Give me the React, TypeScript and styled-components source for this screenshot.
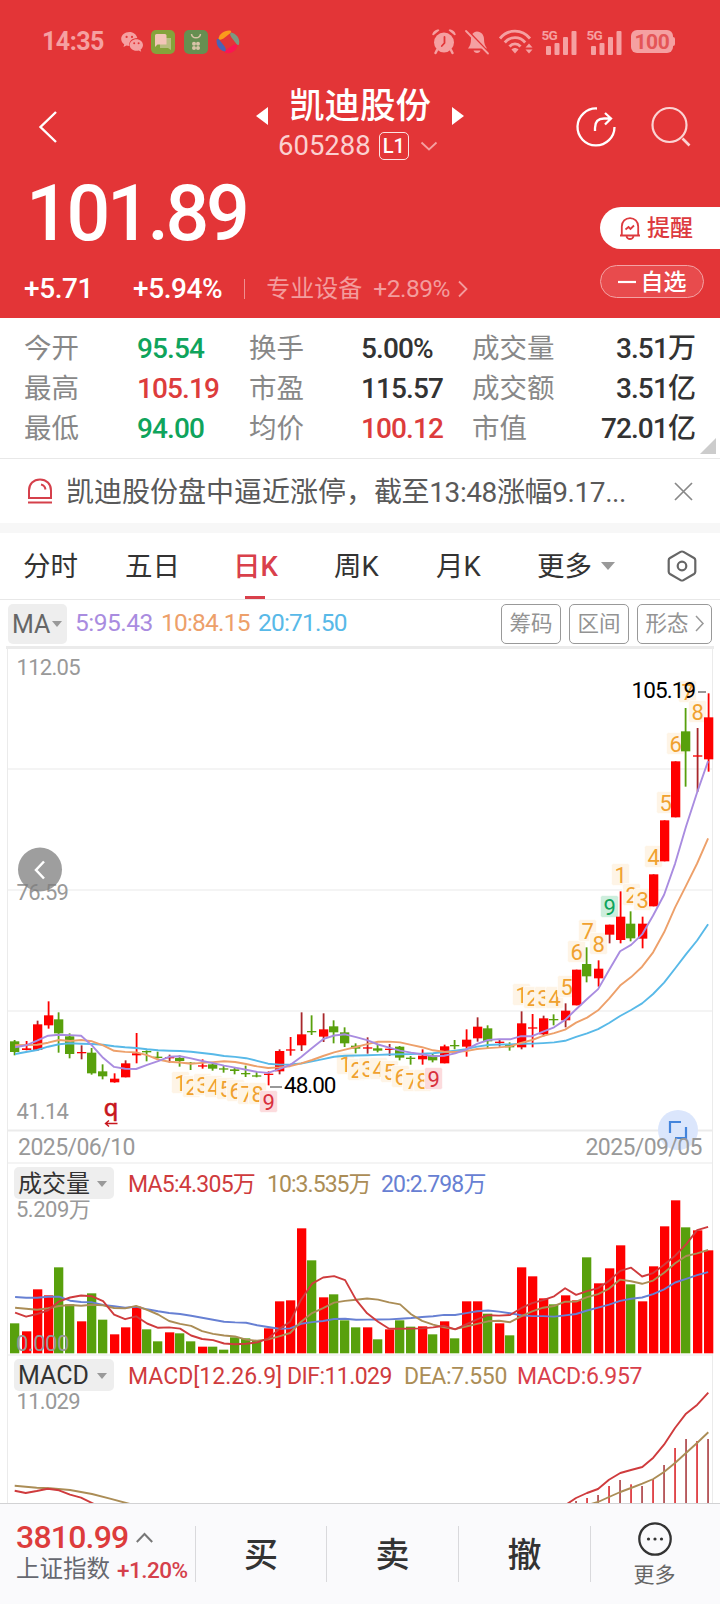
import React from 'react';
import styled, { createGlobalStyle } from 'styled-components';

const GlobalStyle = createGlobalStyle`
  * { box-sizing: border-box; }
  body {
    margin: 0;
    background: #fff;
    font-family: Roboto, 'Noto Sans CJK SC', sans-serif;
    color: #333;
  }
  svg { display: block; flex: none; overflow: visible; }
`;

const FONT = "Roboto, 'Noto Sans CJK SC', sans-serif";

/* ---------- layout ---------- */

const Screen = styled.div`
  width: 720px;
  height: 1604px;
  display: flex;
  flex-direction: column;
  overflow: hidden;
  background: #fff;
`;

const Text = styled.span<{ $size: number; $color?: string; $weight?: number; $ls?: number; $ml?: number; $w?: number }>`
  flex: none;
  white-space: nowrap;
  line-height: 1;
  font-size: ${p => p.$size}px;
  color: ${p => p.$color ?? 'inherit'};
  font-weight: ${p => p.$weight ?? 400};
  letter-spacing: ${p => p.$ls ?? 0}px;
  margin-left: ${p => p.$ml ?? 0}px;
  width: ${p => (p.$w ? `${p.$w}px` : 'auto')};
`;

/* ---------- header ---------- */

const Header = styled.header`
  height: 318px;
  background: #e33537;
  color: #fff;
`;

const StatusBar = styled.div`
  height: 82px;
  padding: 1px 47px 0 42px;
  display: flex;
  align-items: center;
  color: #f5a0a1;
`;

const StatusIcons = styled.div<{ $gap: number; $ml: string }>`
  display: flex;
  align-items: center;
  gap: ${p => p.$gap}px;
  margin-left: ${p => p.$ml};
`;

const Battery = styled.div`
  position: relative;
  width: 42px;
  height: 23px;
  border-radius: 6px;
  background: #f5a0a1;
  color: #e45557;
  font-size: 21px;
  font-weight: 700;
  line-height: 24px;
  text-align: center;
  letter-spacing: -0.3px;
  &::after {
    content: '';
    position: absolute;
    right: -2px;
    top: 7px;
    width: 2px;
    height: 9px;
    border-radius: 0 2px 2px 0;
    background: #f5a0a1;
  }
`;

const NavBar = styled.div`
  height: 88px;
  display: grid;
  grid-template-columns: 256px 208px 1fr;
`;

const NavBack = styled.div`
  padding: 29px 0 0 38px;
`;

const NavCenter = styled.div`
  display: flex;
  flex-direction: column;
`;

const TitleRow = styled.div`
  height: 48px;
  padding-top: 2px;
  display: flex;
  align-items: center;
  justify-content: space-between;
  svg { margin-top: 18px; }
`;

const CodeRow = styled.div`
  height: 32px;
  padding-left: 22px;
  display: flex;
  align-items: center;
`;

const LevelBadge = styled.span`
  width: 30px;
  height: 28px;
  margin: 0 12px 0 8px;
  border: 1.5px solid #fbe3e3;
  border-radius: 5px;
  font-size: 20px;
  line-height: 26px;
  font-weight: 500;
  text-align: center;
`;

const NavActions = styled.div`
  display: flex;
  gap: 35px;
  padding: 25px 0 0 112px;
`;

const QuoteRow = styled.div`
  height: 148px;
  display: flex;
  justify-content: space-between;
`;

const QuoteMain = styled.div`
  display: flex;
  flex-direction: column;
`;

const Price = styled.div`
  height: 80px;
  padding: 5px 0 0 26px;
  font-size: 77px;
  line-height: 78px;
  font-weight: 500;
  letter-spacing: -3.3px;
`;

const ChangeRow = styled.div`
  height: 40px;
  margin-top: 19px;
  padding-left: 24px;
  display: flex;
  align-items: center;
`;

const ThinBar = styled.i`
  width: 1px;
  height: 20px;
  margin: 0 21px 0 22px;
  background: #f08f90;
`;

const QuoteActions = styled.div`
  width: 120px;
  padding-top: 37px;
  display: flex;
  flex-direction: column;
  gap: 16px;
`;

const RemindButton = styled.button`
  height: 42px;
  padding: 1px 0 0 19px;
  border: 0;
  border-radius: 21px 0 0 21px;
  background: #fff;
  color: #dd3a3e;
  font: 500 23px/42px ${FONT};
  display: flex;
  align-items: center;
  gap: 6px;
`;

const WatchButton = styled.button`
  width: 104px;
  height: 33px;
  padding: 1px 0 0;
  border: 1px solid #f3a3a4;
  border-radius: 17px;
  background: #e84b4d;
  color: #fff;
  font: 500 23px/31px ${FONT};
  display: flex;
  align-items: center;
  justify-content: center;
  gap: 5px;
`;

/* ---------- statistics ---------- */

const Stats = styled.section`
  position: relative;
  height: 141px;
  padding: 11px 25px 0 24px;
  border-bottom: 1px solid #e8e8e8;
  display: grid;
  grid-template-columns: 113px 112px 112px 111px 99px 1fr;
  grid-auto-rows: 40px;
  align-items: center;
`;

const StatLabel = styled.span`
  font-size: 27.5px;
  line-height: 40px;
  color: #888;
`;

const StatValue = styled.span<{ $tone: Tone; $right?: boolean }>`
  font-size: 28px;
  line-height: 40px;
  letter-spacing: -0.9px;
  font-weight: 500;
  white-space: nowrap;
  color: ${p => ({ up: '#dd3c3c', down: '#0fa45c', flat: '#333' })[p.$tone]};
  justify-self: ${p => (p.$right ? 'end' : 'start')};
`;

const Corner = styled.i`
  position: absolute;
  right: 4px;
  bottom: 4px;
  border-left: 16px solid transparent;
  border-bottom: 16px solid #ccc;
`;

const News = styled.section`
  height: 64px;
  padding: 0 27px 0 27px;
  display: flex;
  align-items: center;
  justify-content: space-between;
`;

const NewsText = styled.p`
  margin: 3px auto 0 13px;
  font-size: 28px;
  line-height: 40px;
  color: #595959;
  white-space: nowrap;
`;

const NewsTail = styled.span`
  letter-spacing: -0.4px;
`;

const Band = styled.div`
  height: 10px;
  background: #f7f7f7;
`;

/* ---------- tabs ---------- */

const Tabs = styled.nav`
  height: 67px;
  border-bottom: 1px solid #e8e8e8;
  display: flex;
  align-items: center;
`;

const Tab = styled.div<{ $ml: number; $w: number; $active?: boolean }>`
  height: 66px;
  width: ${p => p.$w}px;
  margin-left: ${p => p.$ml}px;
  font-size: 27.5px;
  line-height: 68px;
  font-weight: ${p => (p.$active ? 500 : 400)};
  white-space: nowrap;
  color: ${p => (p.$active ? '#d9404b' : '#333')};
  background: ${p =>
    p.$active ? 'linear-gradient(#d9404b, #d9404b) center bottom / 20px 3px no-repeat' : 'none'};
`;

const Caret = styled.i<{ $ml?: number; $s?: number }>`
  flex: none;
  margin-left: ${p => p.$ml ?? 0}px;
  border: ${p => p.$s ?? 5}px solid transparent;
  border-top-color: #999;
  border-bottom-width: 0;
  border-top-width: ${p => (p.$s ?? 5) + 1}px;
`;

/* ---------- chart panels ---------- */

const MaRow = styled.div`
  height: 46px;
  padding: 1px 8px 0 8px;
  display: flex;
  align-items: center;
`;

const IndicatorButton = styled.button<{ $w: number; $h: number; $pl: number }>`
  flex: none;
  width: ${p => p.$w}px;
  height: ${p => p.$h}px;
  padding: 1px 0 0 ${p => p.$pl}px;
  border: 0;
  border-radius: 5px;
  background: #eee;
  color: #333;
  font: 400 24px/1 ${FONT};
  display: flex;
  align-items: center;
`;

const ToolGroup = styled.div`
  margin-left: auto;
  display: flex;
  gap: 8px;
`;

const ToolButton = styled.button<{ $w: number }>`
  width: ${p => p.$w}px;
  height: 40px;
  padding: 0;
  border: 1px solid #999;
  border-radius: 5px;
  background: #fff;
  color: #939393;
  font: 400 21.5px/1 ${FONT};
  display: flex;
  align-items: center;
  justify-content: center;
  gap: 6px;
`;

const Charts = styled.main`
  height: 857px;
  overflow: hidden;
  background: #fff;
`;

const PanelHead = styled.div<{ $h: number; $pb: number }>`
  height: ${p => p.$h}px;
  padding: 0 0 ${p => p.$pb}px 14px;
  display: flex;
  align-items: flex-end;
  box-shadow: inset 7px 0 #fff, inset 8px 0 #ebebeb, inset -7px 0 #fff, inset -8px 0 #ebebeb;
`;

const Legend = styled.div`
  height: 32px;
  padding-top: 2px;
  display: flex;
  align-items: center;
`;

/* ---------- bottom bar ---------- */

const BottomBar = styled.footer`
  height: 101px;
  border-top: 1px solid #d2d2d4;
  background: #fafafc;
  display: grid;
  grid-template-columns: 195px 131px 132px 132px 1fr;
`;

const IndexCell = styled.div`
  padding: 16px 0 0 16px;
  display: flex;
  flex-direction: column;
`;

const IndexLine = styled.div<{ $h: number }>`
  height: ${p => p.$h}px;
  display: flex;
  align-items: center;
`;

const Action = styled.div`
  height: 56px;
  margin-top: 22px;
  border-left: 1px solid #d9d9dc;
  font-size: 34px;
  line-height: 59px;
  font-weight: 500;
  text-align: center;
`;

const MoreAction = styled(Action)`
  padding-right: 2px;
  display: flex;
  flex-direction: column;
  align-items: center;
  gap: 8px;
  font-size: 21px;
  font-weight: 400;
  line-height: 22px;
  color: #666;
  svg { margin-top: -4px; }
`;

/* ---------- data ---------- */

type Tone = 'up' | 'down' | 'flat';

const STATS: [string, string, Tone][] = [
  ['今开', '95.54', 'down'], ['换手', '5.00%', 'flat'], ['成交量', '3.51万', 'flat'],
  ['最高', '105.19', 'up'], ['市盈', '115.57', 'flat'], ['成交额', '3.51亿', 'flat'],
  ['最低', '94.00', 'down'], ['均价', '100.12', 'up'], ['市值', '72.01亿', 'flat'],
];

const UP = '#fe0000';
const DOWN = '#58a00c';

/* one candle: rising flag, body top, body bottom, wick top, wick bottom */
type Candle = [0 | 1, number, number, number, number];
const shift = (base: number, rows: Candle[]): Candle[] =>
  rows.map(([up, ...v]) => [up, ...v.map(n => base + n / 3)] as Candle);

const CANDLES: Candle[] = [
  ...shift(980, [
    [0, 184, 216, 180, 226], [1, 205, 210, 183, 211], [1, 133, 210, 122, 213], [1, 106, 136, 64, 146],
    [0, 118, 160, 97, 218], [0, 169, 222, 160, 235], [1, 216, 219, 196, 238], [0, 218, 280, 204, 284],
    [0, 274, 289, 253, 298], [1, 296, 307, 280, 308], [1, 250, 292, 241, 292], [1, 220, 226, 159, 250],
    [0, 213, 217, 211, 244], [0, 230, 234, 215, 236], [1, 231, 235, 224, 248], [0, 234, 243, 226, 260],
    [0, 248, 251, 246, 270], [1, 256, 259, 238, 266], [0, 253, 266, 250, 272], [0, 265, 268, 257, 278],
    [0, 268, 273, 263, 283], [0, 279, 282, 257, 291], [0, 286, 289, 276, 292], [1, 281, 284, 274, 316],
    [1, 213, 274, 208, 283], [1, 208, 211, 171, 227], [1, 163, 196, 97, 213], [0, 153, 156, 106, 165],
    [1, 148, 170, 100, 186], [0, 139, 157, 121, 190], [0, 157, 190, 142, 201], [0, 197, 206, 190, 220],
    [1, 202, 205, 172, 221], [0, 205, 212, 195, 217], [1, 206, 209, 192, 228], [0, 200, 233, 198, 241],
    [0, 233, 236, 228, 254], [1, 227, 238, 208, 254], [0, 226, 241, 220, 247], [1, 199, 250, 194, 250],
    [0, 195, 198, 180, 208], [1, 179, 200, 148, 230], [1, 140, 175, 112, 185],
  ]),
  ...shift(840, [
    [0, 565, 604, 556, 625], [1, 605, 608, 598, 620], [0, 614, 622, 607, 632], [1, 550, 622, 514, 628],
    [1, 562, 565, 522, 622], [1, 535, 583, 527, 589], [0, 537, 540, 523, 556], [1, 512, 541, 490, 562],
    [1, 389, 496, 389, 496], [0, 372, 409, 322, 427], [1, 386, 415, 361, 440], [1, 254, 284, 254, 310],
    [1, 230, 300, 154, 310], [0, 251, 295, 214, 304], [1, 251, 296, 230, 325], [1, 103, 199, 103, 199],
  ]),
  ...shift(660, [
    [1, 481, 604, 481, 604], [1, 304, 472, 304, 472], [0, 214, 274, 144, 380], [1, 286, 290, 204, 395],
    [1, 172, 298, 100, 335],
  ]),
];

const VOLUME = [
  490, 514, 388, 406, 322, 433, 484, 400, 479, 523, 502, 440, 508, 544, 517, 520, 544, 560, 560, 569, 532, 535,
  540, 505, 424, 421, 205, 301, 412, 403, 481, 502, 502, 538, 508, 481, 500, 499, 523, 484, 535, 424, 424, 461,
  490, 526, 322, 349, 415, 433, 406, 421, 292, 370, 325, 256, 373, 424, 319, 199, 121, 202, 211, 271,
].map(v => 1160 + v / 3);

const colX = (i: number) => 14.7 + i * 11;
const barX = (i: number) => Math.round(colX(i) + (CANDLES[i][0] ? 1 : 0) - 4.5);

const average = (values: number[], span: number, head: number[]) =>
  values.map((_, i) =>
    i < head.length ? head[i] : values.slice(i - span + 1, i + 1).reduce((a, b) => a + b, 0) / span,
  );
const line = (ys: number[]) => ys.map((y, i) => `${(colX(i) + 0.4).toFixed(1)},${y.toFixed(1)}`).join(' ');
const from = (base: number, v: number[]) => v.map(n => base + n / 3);

const CLOSE = CANDLES.map(c => (c[0] ? c[1] : c[2]));
const PRICE_MA = [
  { color: '#58b9e8', ys: average(CLOSE, 20, from(980, [222, 216, 210, 200, 193, 190, 191, 192, 194, 199, 202, 204, 208, 211, 212, 213, 215, 219, 223])) },
  { color: '#eda06a', ys: average(CLOSE, 10, from(980, [196, 195, 194, 188, 180, 183, 180, 184, 196])) },
  { color: '#a98ce0', ys: average(CLOSE, 5, from(980, [202, 196, 182, 167])) },
];
const VOLUME_MA = [
  { color: '#6780d3', ys: average(VOLUME, 20, from(1160, [411, 413, 413, 410, 410, 422, 426, 427, 435, 439, 443, 440, 448, 454, 459, 462, 467, 473, 479])) },
  { color: '#ab8d56', ys: average(VOLUME, 10, from(1160, [443, 446, 449, 445, 438, 435, 437, 434, 436])) },
  { color: '#cf3b3d', ys: average(VOLUME, 5, from(1160, [458, 470, 462, 451])) },
];

/* nine-turn markers: text, x, y, kind */
type Marker = [string, number, number, ('low' | 'high')?];
const MARKERS: Marker[] = [
  ['1', 180, 1083], ['2', 191, 1087], ['3', 202, 1085], ['4', 213, 1087], ['5', 225, 1089], ['6', 235, 1091],
  ['7', 246, 1094], ['8', 257, 1094], ['9', 268, 1102, 'low'],
  ['1', 345, 1064], ['2', 356, 1070], ['3', 367, 1069], ['4', 378, 1069], ['5', 389, 1072], ['6', 400, 1077],
  ['7', 411, 1081], ['8', 422, 1081], ['9', 433, 1079, 'low'],
  ['1', 521, 995], ['2', 532, 998], ['3', 543, 998], ['4', 554, 998], ['5', 566, 987], ['6', 576, 952],
  ['7', 587, 931], ['8', 598, 944], ['9', 609, 907, 'high'], ['1', 620, 875], ['2', 631, 895], ['3', 642, 900],
  ['4', 653, 857], ['5', 665, 803], ['6', 675, 744], ['7', 687, 692], ['8', 697, 712],
];
const MARKER_COLORS = {
  turn: ['#fef4e6', '#f0a12f'],
  low: ['#fcdbdd', '#d8303c'],
  high: ['#cdeedd', '#0fa45c'],
};

const DIF_LEFT = '14.7,1490.7 25.7,1493 36.7,1491 47.7,1488.7 59,1490.3 70,1494.7 81,1497.7 94,1504';
const DEA_LEFT = '14.7,1485.7 36.7,1487.7 50,1488.3 70,1490 92,1494 110,1498.7 132,1504.5';
const DIF_RIGHT =
  '567,1504 576,1498 587,1493 598,1489 609,1479.7 620.3,1473 631,1470 642.3,1467 653.3,1457.7 664,1444.7 675,1428 686,1413.7 697.3,1404.7 708.3,1392.7';
const DEA_RIGHT =
  '591,1504 598,1502 609,1497 620.3,1492 631,1488 642.3,1483.7 653.3,1479 664,1472 675,1463 686,1453 697.3,1442.7 708.3,1432.3';
const MACD_BARS = [333, 324, 315, 288, 270, 283, 288, 267, 225, 174, 147, 153, 147].map((v, i) => [
  576 + i * 11,
  1390 + v / 3,
]);

/* ---------- icons ---------- */

const WeChat = () => (
  <svg width="22" height="20" viewBox="0 0 22 20" fill="#f5a0a1">
    <path d="M8.4 0C3.8 0 .2 3 .2 7c0 2.100 1.200 4 3 5.300L2.500 15l3-1.500c.9.200 1.900.400 2.900.400C7.500 9.600 11 6 16.300 6 15.600 2.600 12.300 0 8.400 0Z" />
    <path d="M22 13c0-3.200-3-5.800-6.600-5.800S8.700 9.800 8.700 13s3 5.800 6.700 5.800c.8 0 1.600-.1 2.300-.3l2.500 1.300-.6-2.200C21.100 16.500 22 14.900 22 13Z" />
    <circle cx="5.600" cy="4.900" r="1.100" fill="#e33537" /><circle cx="11" cy="4.900" r="1.100" fill="#e33537" />
    <circle cx="13.200" cy="11.300" r="1" fill="#e33537" /><circle cx="17.600" cy="11.300" r="1" fill="#e33537" />
  </svg>
);
const ChatApp = () => (
  <svg width="24" height="24" viewBox="0 0 24 24">
    <rect width="24" height="24" rx="5" fill="#85a33b" />
    <path d="M9 8h11v12l-3-2H9z" fill="#b9bd80" />
    <path d="M5.500 4H14a1.500 1.500 0 0 1 1.500 1.500v9H6.500L4 17V5.500A1.500 1.500 0 0 1 5.500 4Z" fill="#f3c5b8" />
  </svg>
);
const BagApp = () => (
  <svg width="24" height="24" viewBox="0 0 24 24">
    <rect width="24" height="24" rx="5" fill="#668f51" />
    <path d="M7.500 4c.5 5 8.500 5 9 0" fill="none" stroke="#d9c4a8" strokeWidth="1.500" />
    <g fill="#d9c4a8"><circle cx="10" cy="13.800" r="2" /><circle cx="14" cy="13.800" r="2" /><circle cx="10" cy="18" r="2" /><circle cx="14" cy="18" r="2" /></g>
  </svg>
);
const Pinwheel = () => (
  <svg width="24" height="24" viewBox="0 0 24 24">
    <path d="M2.500 9C3 4 8 .3 13.500.500c2 .1 2 1.500 1 2.500L7.500 8.500C5.500 9.800 3.500 10 2.500 9Z" fill="#fb9a1c" />
    <path d="M15 2.500c5 .8 8.800 5.500 8.200 11-.3 2-1.600 1.800-2.500.8L15.500 7.500C14 5.500 13.700 3.500 15 2.500Z" fill="#7b9a82" />
    <path d="M21.300 15.500c-.8 5-6 8.400-11 7.600-2-.4-1.800-1.700-.8-2.600l7-5c2-1.300 4-1.300 4.800 0Z" fill="#fb1552" />
    <path d="M9 21.500C4 20.500.3 16 .6 10.500c.2-2 1.600-2 2.500-1l5.500 7c1.400 2 1.600 4 .4 5Z" fill="#4b63b5" />
  </svg>
);
const Alarm = () => (
  <svg width="24" height="25" viewBox="0 0 24 25" fill="#f5a0a1">
    <circle cx="12" cy="13.500" r="10" />
    <path d="M.3 6C.3 3 3.500.3 7 .6L7.300 1.600 1.500 6.300ZM23.700 6C23.700 3 20.500.3 17 .6L16.700 1.600 22.500 6.300Z" />
    <path d="m5 21-1.500 3M19 21l1.500 3" stroke="#f5a0a1" strokeWidth="2.500" strokeLinecap="round" />
    <path d="M12.500 8v6L9.800 17" fill="none" stroke="#e33537" strokeWidth="1.800" strokeLinecap="round" />
  </svg>
);
const BellOff = () => (
  <svg width="24" height="24" viewBox="0 0 24 24" fill="#f5a0a1">
    <path d="M12 1.500c4.500.3 7 3.500 7 7.500 0 4.500 1 7 3 9.500H3C5 16 6 13.500 6 9c0-4 2-7.200 6-7.500Z" />
    <path d="M8.500 20.500h7c-.5 1.600-1.700 2.500-3.500 2.500s-3-.9-3.500-2.500Z" />
    <path d="m2.500.500 22 23" stroke="#e33537" strokeWidth="2" />
    <path d="m1 1 22 22.500" stroke="#f5a0a1" strokeWidth="1.800" strokeLinecap="round" />
  </svg>
);
const Wifi = () => (
  <svg width="34" height="25" viewBox="0 0 34 25" fill="none" stroke="#f5a0a1" strokeWidth="2.800">
    <path d="M1 9.500C9-.300 23-.300 31 9.500M5.800 13.500c5.400-6.600 15-6.600 20.400 0M10.500 17.500c3-3.500 8-3.500 11 0" />
    <path d="M12.500 20.500c2-2 5-2 7 0L16 24.500Z" fill="#f5a0a1" stroke="none" />
    <path d="m26.500 18.500 3.500-4 3.500 4ZM26.500 20.500l3.500 4 3.500-4Z" fill="#f5a0a1" stroke="none" />
  </svg>
);
const Signal = () => (
  <svg width="35" height="26" viewBox="0 0 35 26" fill="#f5a0a1">
    <text x="-.5" y="11" fontFamily={FONT} fontSize="13.500" fontWeight="700" letterSpacing="-0.700">5G</text>
    <rect x="4" y="17" width="5" height="9" rx="1" /><rect x="12.500" y="14" width="5" height="12" rx="1" />
    <rect x="21" y="8" width="5" height="18" rx="1" /><rect x="29.500" y="2" width="5" height="24" rx="1" />
  </svg>
);
const Chevron = ({ w, h, d, color, sw = 1.8 }: { w: number; h: number; d: string; color: string; sw?: number }) => (
  <svg width={w} height={h} viewBox={`0 0 ${w} ${h}`} fill="none" stroke={color} strokeWidth={sw}>
    <path d={d} />
  </svg>
);
const Share = () => (
  <svg width="40" height="40" viewBox="0 0 40 40" fill="none" stroke="#fff" strokeWidth="2.300">
    <path d="M21 1.500A18.500 18.500 0 1 0 38.500 20" />
    <path d="M19 24v-3c0-6 3-9.500 9-9.500h6.500M29 6l6 5.500L29 17.500" />
  </svg>
);
const Search = () => (
  <svg width="40" height="40" viewBox="0 0 40 40" fill="none" stroke="#fbd3d3" strokeWidth="2.200">
    <circle cx="18.500" cy="18" r="17" /><path d="m31.500 31.500 7 7" strokeWidth="2.600" />
  </svg>
);
const Bell = () => (
  <svg width="22" height="23" viewBox="0 0 22 23" fill="none" stroke="#dd3a3e" strokeWidth="1.800">
    <path d="M1 18.500h20M2.800 18V9.500C2.800 4.500 6.500 1.200 11 1.200s8.200 3.300 8.200 8.300V18M7.500 19.500c.5 1.600 1.700 2.500 3.500 2.500s3-.9 3.500-2.500" />
    <path d="m6.500 12.500 3-2.500 2 2 3.500-3.500" />
  </svg>
);
const Siren = () => (
  <svg width="26" height="26" viewBox="0 0 26 26" fill="none" stroke="#d5404b" strokeWidth="2">
    <path d="M2 20v-7.500C2 6 6.500 1.500 13 1.500S24 6 24 12.500V20ZM1 24.500h24M14 6.500c2.500.5 4 2 4.500 5" />
  </svg>
);
const Hexagon = () => (
  <svg width="30" height="32" viewBox="0 0 30 32" fill="none" stroke="#666" strokeWidth="2.200">
    <path d="M13.500 1.900Q15 1.100 16.500 1.900L27 8q1.300.8 1.300 2.200v11.600q0 1.400-1.300 2.200l-10.500 6.100q-1.500.8-3 0L3 24q-1.300-.8-1.300-2.200V10.200Q1.700 8.800 3 8Z" />
    <circle cx="15" cy="16" r="4.300" />
  </svg>
);
const MoreIcon = () => (
  <svg width="34" height="34" viewBox="0 0 34 34">
    <circle cx="17" cy="17" r="15.700" fill="none" stroke="#333" strokeWidth="2.300" />
    <g fill="#333"><circle cx="10.500" cy="17" r="1.600" /><circle cx="17" cy="17" r="1.600" /><circle cx="23.500" cy="17" r="1.600" /></g>
  </svg>
);

/* ---------- charts ---------- */

const AxisText = ({ x, y, size = 22, children, fill = '#999', ls = -0.7 }: { x: number; y: number; size?: number; children: string; fill?: string; ls?: number }) => (
  <text x={x} y={y} fontFamily={FONT} fontSize={size} fill={fill} letterSpacing={ls}>{children}</text>
);

const Lines = ({ sets }: { sets: { color: string; ys: number[] }[] }) => (
  <g fill="none" strokeWidth="1.900" strokeLinejoin="round">
    {sets.map(s => <polyline key={s.color} points={line(s.ys)} stroke={s.color} />)}
  </g>
);

const PriceChart = () => (
  <svg width="720" height="518" viewBox="0 646 720 518">
    <path d="M6 647.500h708" stroke="#ebebeb" strokeWidth="3" />
    <path d="M7.500 646v518M712.500 646v518" stroke="#ebebeb" />
    <path d="M8 769h704M8 890h704M8 1011h704M8 1163h704" stroke="#f1f1f1" strokeWidth="1.500" />
    <path d="M8 1130.500h704" stroke="#ebebeb" strokeWidth="2" />
    <AxisText x={16.500} y={675}>112.05</AxisText>
    <AxisText x={16.500} y={899.5}>76.59</AxisText>
    <AxisText x={16.500} y={1119}>41.14</AxisText>
    {MARKERS.map(([t, x, y, kind], i) => {
      const [bg, fg] = MARKER_COLORS[kind ?? 'turn'];
      return (
        <g key={i}>
          <rect x={x - 8.500} y={y - 11.500} width="18" height="22" rx="2" fill={bg} stroke="#fff" strokeWidth=".6" />
          <text x={x + 0.6} y={y + 7.800} fontFamily={FONT} fontSize="22" fill={fg} textAnchor="middle">{t}</text>
        </g>
      );
    })}
    {CANDLES.map(([up, top, bottom, high, low], i) => {
      const x = barX(i);
      const color = up ? UP : DOWN;
      return (
        <g key={i} fill={color}>
          <rect x={x + 3.700} y={high} width="1.800" height={low - high} fill={up && i % 2 === 0 ? '#a8272b' : color} />
          <rect x={x} y={top} width="9.300" height={Math.max(bottom - top, 1.300)} />
        </g>
      );
    })}
    <Lines sets={PRICE_MA} />
    <path d="M270 1087h12M698 692h8" stroke="#777" strokeWidth="1.500" />
    <AxisText x={284} y={1093} size={22.5} fill="#000" ls={-1}>48.00</AxisText>
    <AxisText x={631.5} y={698} size={22.5} fill="#000" ls={-0.9}>105.19</AxisText>
    <text x="111" y="1116" fontFamily="'DejaVu Sans', sans-serif" fontSize="23" stroke="#c8161d" strokeWidth=".6" fill="#c8161d" textAnchor="middle">q</text>
    <path d="M105.500 1123.500h12M109 1120.500l-3.500 3 3.500 3" fill="none" stroke="#c8161d" strokeWidth="1.400" />
    <circle cx="40" cy="869.500" r="22" fill="#7d7d7d" fillOpacity=".75" />
    <path d="m44 861.500-8 8.500 8 8.500" fill="none" stroke="#fff" strokeWidth="2.500" />
    <circle cx="678" cy="1130" r="20" fill="#dbe6fc" />
    <path d="M670 1133v-11h11M686 1127v11h-11" fill="none" stroke="#4384dc" strokeWidth="2.200" />
    <AxisText x={18} y={1155} size={23} ls={-0.55}>2025/06/10</AxisText>
    <AxisText x={585.5} y={1155} size={23} ls={-0.6}>2025/09/05</AxisText>
  </svg>
);

const VolumeChart = () => (
  <svg width="720" height="156" viewBox="0 1200 720 156">
    <path d="M7.500 1200v156M712.500 1200v156" stroke="#ebebeb" />
    {VOLUME.map((y, i) => (
      <rect key={i} x={barX(i)} y={y} width="9.300" height={1353.3 - y} fill={CANDLES[i][0] ? UP : DOWN} />
    ))}
    <Lines sets={VOLUME_MA} />
    <path d="M8 1355h704" stroke="#f1f1f1" strokeWidth="1.500" />
    <AxisText x={16} y={1217} ls={-0.5}>5.209万</AxisText>
    <AxisText x={16} y={1351} ls={-0.5}>0.000</AxisText>
  </svg>
);

const MacdChart = () => (
  <svg width="720" height="112" viewBox="0 1391 720 112">
    <path d="M7.500 1391v112M712.500 1391v112" stroke="#ebebeb" />
    {MACD_BARS.map(([x, y], i) => (
      <rect key={i} x={x - 0.8} y={y} width="1.700" height={1504 - y} fill={i % 2 ? '#dc3237' : '#ae474b'} />
    ))}
    <g fill="none" strokeWidth="1.900" strokeLinejoin="round">
      <polyline points={DEA_LEFT} stroke="#ab8d56" /><polyline points={DEA_RIGHT} stroke="#ab8d56" />
      <polyline points={DIF_LEFT} stroke="#cf3b3d" /><polyline points={DIF_RIGHT} stroke="#cf3b3d" />
    </g>
    <AxisText x={16.500} y={1409}>11.029</AxisText>
  </svg>
);

/* ---------- page ---------- */

export default function App() {
  return (
    <Screen>
      <GlobalStyle />
      <Header>
        <StatusBar>
          <Text $size={25} $weight={700} $ls={-0.5}>14:35</Text>
          <StatusIcons $gap={8.5} $ml="17px"><WeChat /><ChatApp /><BagApp /><Pinwheel /></StatusIcons>
          <StatusIcons $gap={9.5} $ml="auto">
            <Alarm /><BellOff /><Wifi /><Signal /><Signal /><Battery>100</Battery>
          </StatusIcons>
        </StatusBar>
        <NavBar>
          <NavBack><Chevron w={20} h={32} d="M18 1 2.500 16 18 31" color="#fff" sw={2.4} /></NavBack>
          <NavCenter>
            <TitleRow>
              <svg width="12" height="18" viewBox="0 0 12 18"><path d="M12 0v18L0 9Z" fill="#fff" /></svg>
              <Text $size={35.5} $weight={500}>凯迪股份</Text>
              <svg width="12" height="18" viewBox="0 0 12 18"><path d="M0 0v18l12-9Z" fill="#fff" /></svg>
            </TitleRow>
            <CodeRow>
              <Text $size={27.5} $color="#fbd0d0">605288</Text>
              <LevelBadge>L1</LevelBadge>
              <Chevron w={16} h={10} d="m.5 1.500 7.500 7 7.500-7" color="#f5a0a1" />
            </CodeRow>
          </NavCenter>
          <NavActions><Share /><Search /></NavActions>
        </NavBar>
        <QuoteRow>
          <QuoteMain>
            <Price>101.89</Price>
            <ChangeRow>
              <Text $size={28} $weight={500} $w={109} $ls={-0.4}>+5.71</Text>
              <Text $size={28} $weight={500} $ls={-0.4}>+5.94%</Text>
              <ThinBar />
              <Text $size={24} $color="#f39c9d">专业设备</Text>
              <Text $size={24.5} $color="#f39c9d" $ml={11} $ls={-0.5}>+2.89%</Text>
              <StatusIcons $gap={0} $ml="8px"><Chevron w={10} h={18} d="m1 1.500 7.500 7.500L1 16.500" color="#f39c9d" /></StatusIcons>
            </ChangeRow>
          </QuoteMain>
          <QuoteActions>
            <RemindButton><Bell />提醒</RemindButton>
            <WatchButton>
              <svg width="18" height="4" viewBox="0 0 18 4"><path d="M0 2h18" stroke="#fff" strokeWidth="2.200" /></svg>
              自选
            </WatchButton>
          </QuoteActions>
        </QuoteRow>
      </Header>

      <Stats>
        {STATS.map(([label, value, tone], i) => (
          <React.Fragment key={label}>
            <StatLabel>{label}</StatLabel>
            <StatValue $tone={tone} $right={i % 3 === 2}>{value}</StatValue>
          </React.Fragment>
        ))}
        <Corner />
      </Stats>

      <News>
        <Siren />
        <NewsText>凯迪股份盘中逼近涨停，<NewsTail>截至13:48涨幅9.17...</NewsTail></NewsText>
        <Chevron w={19} h={19} d="m1 1 17 17M18 1 1 18" color="#888" sw={1.7} />
      </News>
      <Band />

      <Tabs>
        <Tab $ml={23} $w={56}>分时</Tab>
        <Tab $ml={46} $w={56}>五日</Tab>
        <Tab $ml={52} $w={44} $active>日K</Tab>
        <Tab $ml={57} $w={45}>周K</Tab>
        <Tab $ml={57} $w={45}>月K</Tab>
        <Tab $ml={56} $w={56}>更多</Tab>
        <Caret $ml={8} $s={7} />
        <StatusIcons $gap={0} $ml="52px"><Hexagon /></StatusIcons>
      </Tabs>

      <MaRow>
        <IndicatorButton $w={59} $h={40} $pl={4}>
          <Text $size={25} $color="#666">MA</Text><Caret $ml={2} />
        </IndicatorButton>
        <Text $size={24.5} $color="#a98ce0" $ml={8} $w={86} $ls={-0.5}>5:95.43</Text>
        <Text $size={24.5} $color="#eda06a" $w={97} $ls={-0.8}>10:84.15</Text>
        <Text $size={24.5} $color="#58b9e8" $ls={-0.8}>20:71.50</Text>
        <ToolGroup>
          <ToolButton $w={60}>筹码</ToolButton>
          <ToolButton $w={60}>区间</ToolButton>
          <ToolButton $w={75}>形态<Chevron w={9} h={17} d="m1 1 7 7.500L1 16" color="#999" sw={1.500} /></ToolButton>
        </ToolGroup>
      </MaRow>

      <Charts>
        <PriceChart />
        <PanelHead $h={36} $pb={1}>
          <IndicatorButton $w={100} $h={32} $pl={4}>成交量<Caret $ml={7} /></IndicatorButton>
          <Legend>
            <Text $size={23} $color="#cf3b3d" $ml={14} $w={139} $ls={-0.75}>MA5:4.305万</Text>
            <Text $size={23} $color="#ab8d56" $w={114} $ls={-0.95}>10:3.535万</Text>
            <Text $size={23} $color="#6780d3" $ls={-0.85}>20:2.798万</Text>
          </Legend>
        </PanelHead>
        <VolumeChart />
        <PanelHead $h={35} $pb={0}>
          <IndicatorButton $w={100} $h={32} $pl={3}><Text $size={25} $w={73}>MACD</Text><Caret $ml={7} /></IndicatorButton>
          <Legend>
            <Text $size={23} $color="#cf3b3d" $ml={14} $w={159}>MACD[12.26.9]</Text>
            <Text $size={23} $color="#cf3b3d" $w={117} $ls={-0.55}>DIF:11.029</Text>
            <Text $size={23} $color="#ab8d56" $w={113} $ls={-0.4}>DEA:7.550</Text>
            <Text $size={23} $color="#d9404b" $ls={-0.35}>MACD:6.957</Text>
          </Legend>
        </PanelHead>
        <MacdChart />
      </Charts>

      <BottomBar>
        <IndexCell>
          <IndexLine $h={34}>
            <Text $size={32} $weight={500} $color="#dd3c3c" $ls={-0.8}>3810.99</Text>
            <StatusIcons $gap={0} $ml="8px"><Chevron w={17} h={11} d="m.8 10 7.700-8 7.700 8" color="#777" sw={2} /></StatusIcons>
          </IndexLine>
          <IndexLine $h={32}>
            <Text $size={23.5} $color="#666870">上证指数</Text>
            <Text $size={22.5} $weight={500} $color="#d5404b" $ml={7} $ls={-0.5}>+1.20%</Text>
          </IndexLine>
        </IndexCell>
        <Action>买</Action>
        <Action>卖</Action>
        <Action>撤</Action>
        <MoreAction><MoreIcon />更多</MoreAction>
      </BottomBar>
    </Screen>
  );
}
